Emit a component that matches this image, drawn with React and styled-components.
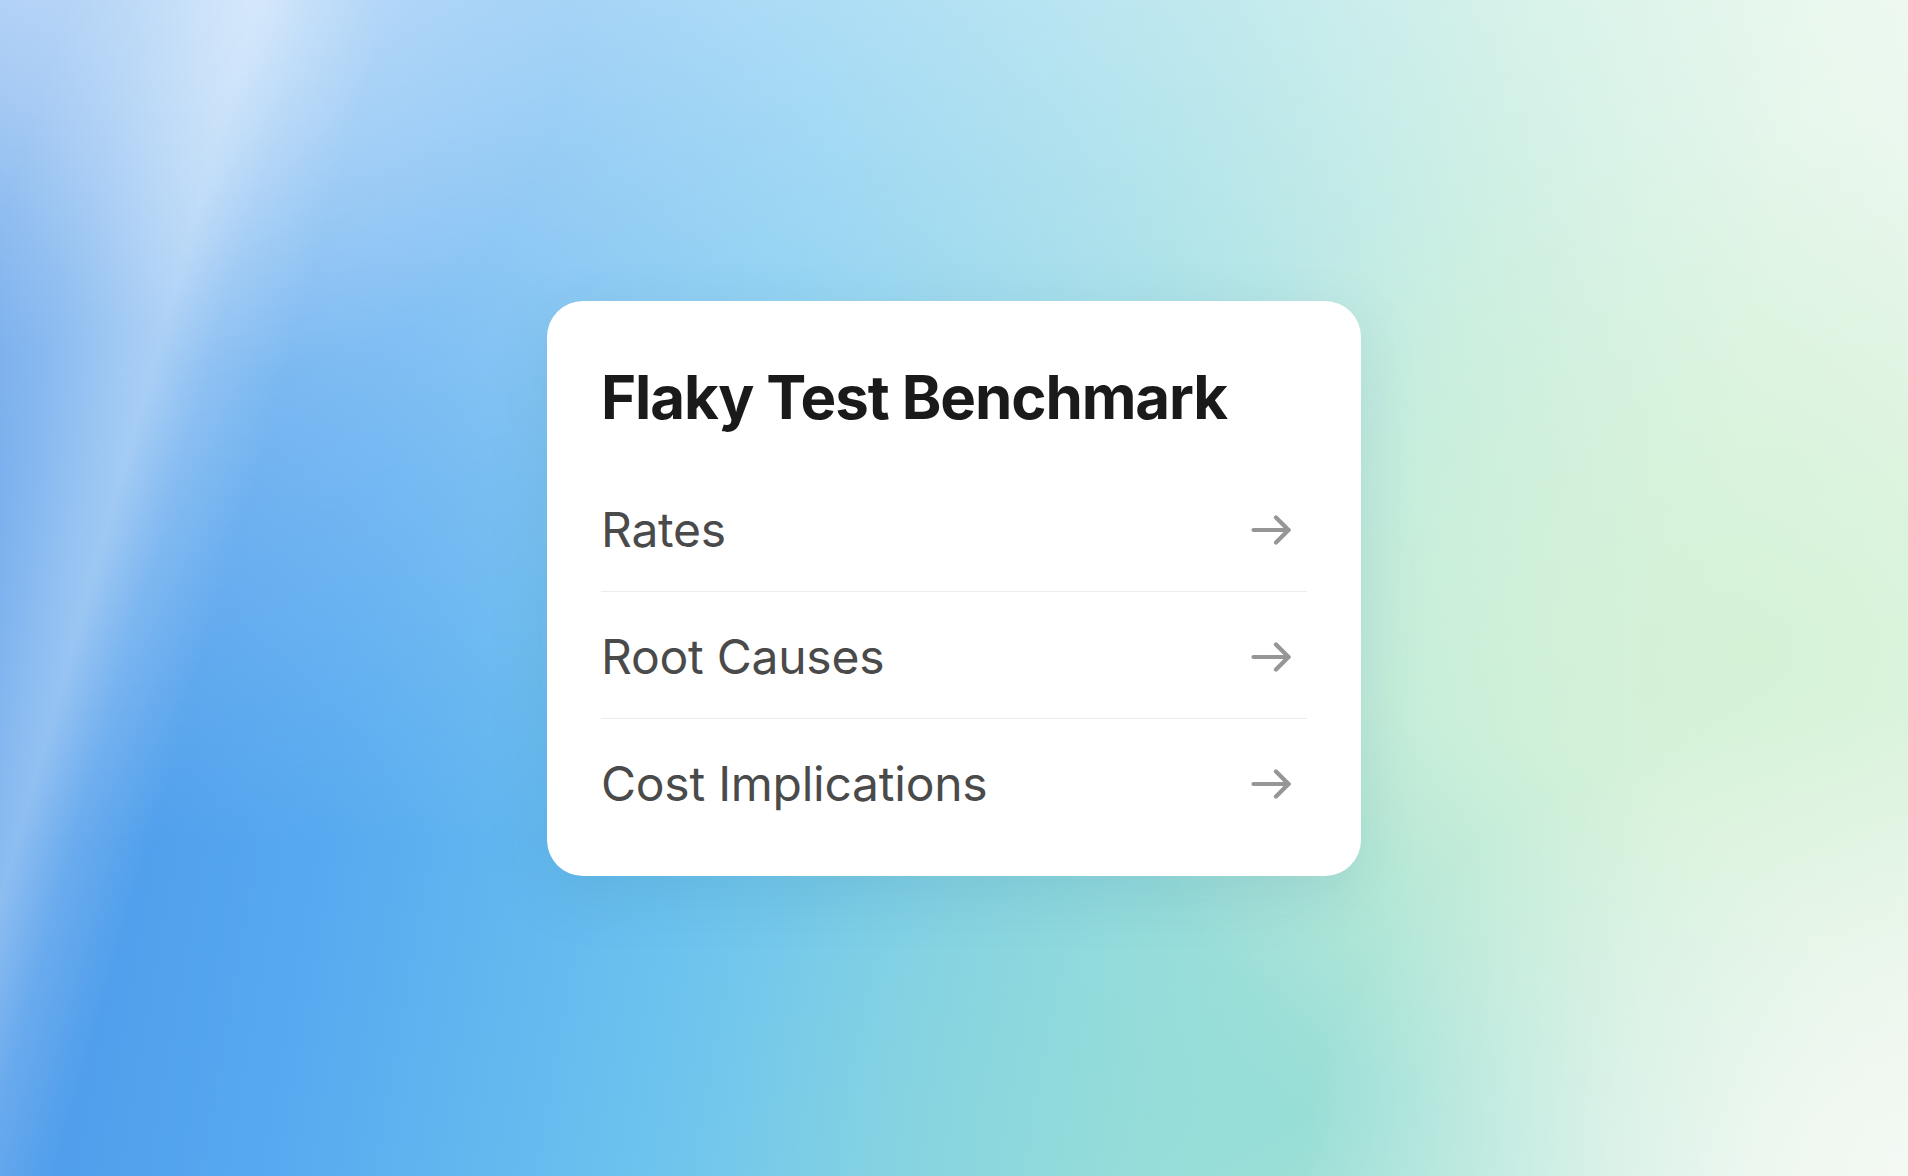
import React from 'react';
import styled, { createGlobalStyle } from 'styled-components';

const Global = createGlobalStyle`
  html, body {
    margin: 0;
    padding: 0;
  }
  body {
    font-family: Inter, "Noto Sans", sans-serif;
  }
`;

const Page = styled.div`
  width: 100vw;
  height: 100vh;
  display: grid;
  place-items: center;
  background:
    linear-gradient(106deg, rgba(255,255,255,0) 3%, rgba(255,255,255,0.12) 6.5%, rgba(255,255,255,0.3) 10%, rgba(255,255,255,0.36) 11.5%, rgba(255,255,255,0.16) 14%, rgba(255,255,255,0) 17.5%),
    radial-gradient(ellipse 16% 32% at 14% 0%, rgba(235,245,255,0.35), rgba(235,245,255,0) 100%),
    radial-gradient(ellipse 20% 30% at 0% 0%, rgba(225,240,255,0.3), rgba(225,240,255,0) 100%),
    radial-gradient(ellipse 32% 40% at 100% 100%, rgba(244,249,244,0.95), rgba(244,249,244,0) 100%),
    radial-gradient(ellipse 35% 45% at 92% 55%, rgba(212,242,214,0.9), rgba(212,242,214,0) 100%),
    radial-gradient(ellipse 30% 35% at 68% 95%, rgba(140,218,214,0.7), rgba(140,218,214,0) 100%),
    linear-gradient(180deg, rgba(255,255,255,0.45) 0%, rgba(255,255,255,0.18) 40%, rgba(255,255,255,0) 72%),
    linear-gradient(100deg, #4890e6 0%, #56a9f0 22%, #6cc3ee 40%, #8fd8e0 58%, #b6e8d8 72%, #d9f2e0 86%, #eaf6ec 100%);
`;

const Card = styled.div`
  width: 814px;
  box-sizing: border-box;
  padding: 66px 54px 30px;
  background: #ffffff;
  border-radius: 36px;
  box-shadow: 0 18px 60px rgba(40, 110, 140, 0.14);
  display: flex;
  flex-direction: column;
`;

const Title = styled.h1`
  margin: 0 0 38px;
  font-size: 60px;
  line-height: 60px;
  font-weight: 700;
  color: #1a1a1a;
  letter-spacing: -1.1px;
`;

const List = styled.ul`
  list-style: none;
  margin: 0;
  padding: 0;
`;

const Row = styled.li`
  display: flex;
  align-items: center;
  justify-content: space-between;
  padding: 41px 0 37px;
  border-bottom: 1px solid ${({ last }) => (last ? 'transparent' : '#ececec')};
  cursor: pointer;
`;

const Label = styled.span`
  font-size: 48px;
  line-height: 48px;
  font-weight: 400;
  color: #4a4a4a;
  letter-spacing: -0.25px;
`;

const Arrow = styled.svg`
  width: 40px;
  height: 30px;
  margin-right: 16px;
  flex-shrink: 0;
`;

const ArrowIcon = () => (
  <Arrow viewBox="0 0 40 30" fill="none" stroke="#969696" strokeWidth="4.2" strokeLinecap="round" strokeLinejoin="round">
    <path d="M2.5 15H37.5" />
    <path d="M25 2.5L37.5 15L25 27.5" />
  </Arrow>
);

const items = ['Rates', 'Root Causes', 'Cost Implications'];

const App = () => {
  return (
    <Page>
      <Global />
      <Card>
        <Title>Flaky Test Benchmark</Title>
        <List>
          {items.map((item, i) =>
            <Row key={item} last={i === items.length - 1 ? 1 : 0}>
              <Label>{item}</Label>
              <ArrowIcon />
            </Row>
          )}
        </List>
      </Card>
    </Page>
  );
};

export default App;
